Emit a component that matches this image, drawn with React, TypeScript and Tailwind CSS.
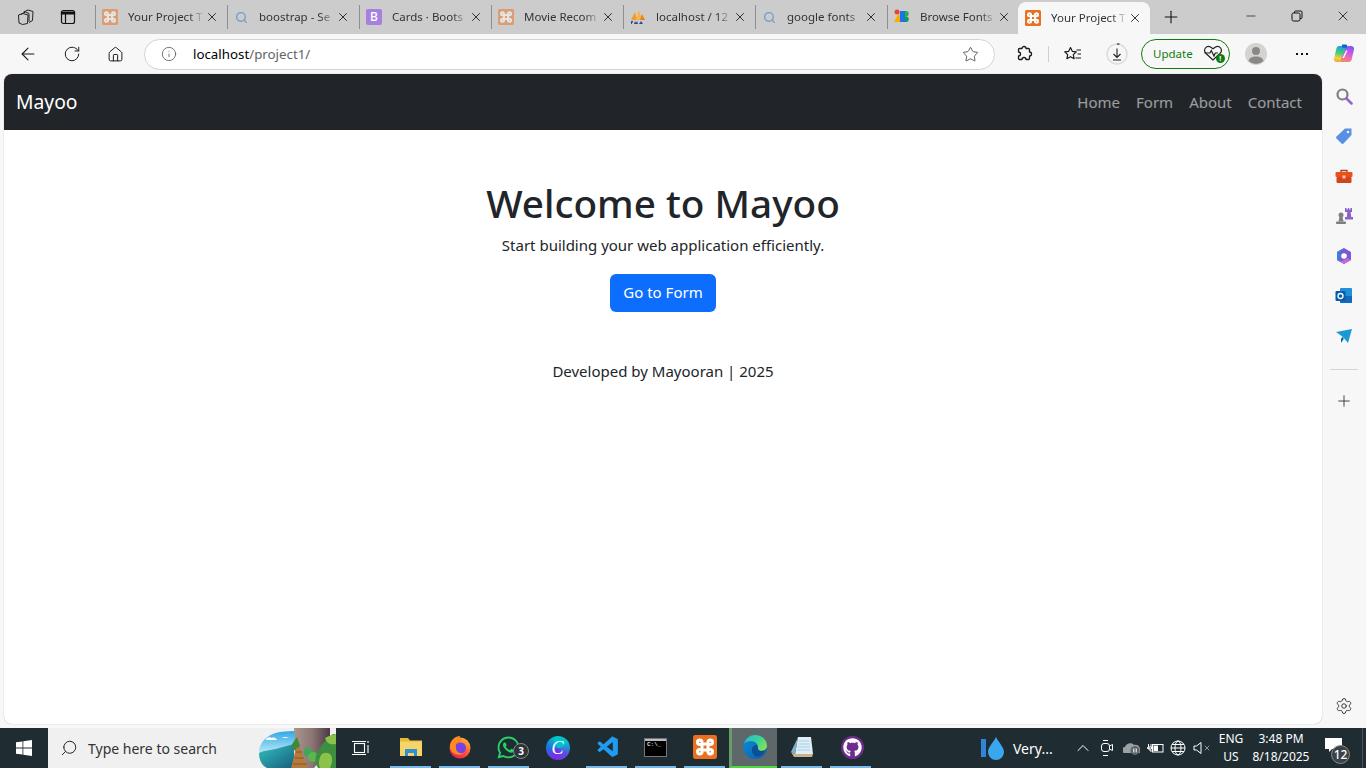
import { ArrowLeft, ChevronUp, Home, Info, Minus, Plus, RotateCw, Search, Settings, Star, X } from "lucide-react";
import { FaGithub, FaWhatsapp } from "react-icons/fa";
import { VscVscode } from "react-icons/vsc";

const Xampp = ({ faded = false, size = 16 }: { faded?: boolean; size?: number }) => (
  <svg width={size} height={size} viewBox="0 0 16 16" className={faded ? "shrink-0 opacity-50" : "shrink-0"}>
    <rect width="16" height="16" rx="1.500" fill="#e8701f" />
    <path
      d="M6 6V4.800a1.500 1.500 0 1 0-1.500 1.500H6zM10 6V4.800a1.500 1.500 0 1 1 1.500 1.500H10zM6 10v1.200a1.500 1.500 0 1 1-1.500-1.500H6zM10 10v1.200a1.500 1.500 0 1 0 1.500-1.500H10zM6 6h4v4H6z"
      fill="none"
      stroke="#fff"
      strokeWidth="2"
      strokeLinejoin="round"
    />
  </svg>
);

const SearchFav = () => <Search size={13} strokeWidth={2.500} className="mx-[1px] shrink-0 text-[#6f9fcb]" />;

const BootstrapFav = () => (
  <div className="flex h-4 w-4 shrink-0 items-center justify-center rounded-[2px] bg-[#a77fe0] text-[12px] font-medium leading-none text-white">
    B
  </div>
);

const PmaFav = () => (
  <svg width="16" height="16" viewBox="0 0 16 16" className="shrink-0">
    <path d="M1 11 5 3l2 8z" fill="#f29a2e" />
    <path d="M6 11 9 1l3 10z" fill="#f7b24a" />
    <path d="M10 11 12 5l3 6z" fill="#e8821e" />
    <path d="M1 15V12h2v1.500H2V15zM4 15l1-3 1 2 1-2 1 3zM9 15l2-3 2 3z" fill="#2d4a8c" />
  </svg>
);

const FontsFav = () => (
  <svg width="16" height="16" viewBox="0 0 16 16" className="shrink-0">
    <path d="M0 13 5 4l2 9z" fill="#f9ab00" />
    <circle cx="3" cy="3" r="2.500" fill="#ea4335" />
    <rect x="6" y="2" width="5" height="11" fill="#1a73e8" />
    <path d="M11 2h2a3 3 0 0 1 0 5.500h-2z" fill="#34a853" />
    <path d="M11 7.500h2a3 3 0 0 1 0 5.500h-2z" fill="#0f9d58" />
  </svg>
);

const tabs = [
  { id: 1, icon: <Xampp faded />, title: "Your Project T" },
  { id: 2, icon: <SearchFav />, title: "boostrap - Se" },
  { id: 3, icon: <BootstrapFav />, title: "Cards · Boots" },
  { id: 4, icon: <Xampp faded />, title: "Movie Recom" },
  { id: 5, icon: <PmaFav />, title: "localhost / 12" },
  { id: 6, icon: <SearchFav />, title: "google fonts" },
  { id: 7, icon: <FontsFav />, title: "Browse Fonts" },
];

function Tab({ icon, title, active }: { icon: React.ReactNode; title: string; active?: boolean }) {
  return (
    <div
      className={
        active
          ? "-ml-px flex h-[32px] w-[132px] shrink-0 items-center rounded-t-lg bg-[#f7f7f7] pl-[7px]"
          : "flex h-[24px] w-[132px] shrink-0 items-center self-center border-l border-[#8f8f8f] pl-[6px]"
      }
    >
      {icon}
      <span className="ml-[10px] w-[76px] whitespace-nowrap text-[11.500px] text-[#333] [mask-image:linear-gradient(to_right,black_80%,transparent)]">
        {title}
      </span>
      <X size={14} strokeWidth={1.500} className="ml-[1px] shrink-0 text-[#1a1a1a]" />
    </div>
  );
}

function Workspaces() {
  return (
    <svg width="18" height="18" viewBox="0 0 18 18" fill="none" stroke="#222" strokeWidth="1">
      <path d="M6.500 4 11 2l5 1.500-.5 9-3.500 2" />
      <path d="M4 6.300 8.500 4l3.500 1.500v8" />
      <path d="M1.500 7 6 5.500 11 7l-.5 8.500-5 1-3.500-1.500z" />
    </svg>
  );
}

function Extensions() {
  return (
    <svg width="18" height="18" viewBox="0 0 18 18" fill="none" stroke="#1a1a1a" strokeWidth="1.300" strokeLinejoin="round">
      <path d="M7 3.500a2 2 0 0 1 4 0h2.500a1 1 0 0 1 1 1V7a2 2 0 0 1 0 4v2.500a1 1 0 0 1-1 1H11a2 2 0 0 0-4 0H4.500a1 1 0 0 1-1-1V11a2 2 0 0 0 0-4V4.500a1 1 0 0 1 1-1z" />
    </svg>
  );
}

function Favorites() {
  return (
    <svg width="20" height="18" viewBox="0 0 20 18" fill="none" stroke="#1a1a1a" strokeWidth="1.200" strokeLinejoin="round">
      <path d="m7.500 2.500 1.800 3.800 4 .5-3 2.800.8 4.100-3.600-2-3.600 2 .8-4.100-3-2.800 4-.5z" />
      <path d="M13.500 5H18M14.500 9H18M12.500 13H18" />
    </svg>
  );
}

function DownloadRing() {
  return (
    <svg width="22" height="22" viewBox="0 0 22 22" fill="none">
      <circle cx="11" cy="11" r="10" stroke="#dcdcdc" strokeWidth="1.500" />
      <path d="M11 1a10 10 0 0 1 2.500.3" stroke="#555" strokeWidth="1.500" />
      <path d="M11 5.500v9M7.500 11l3.500 3.500 3.500-3.500M7 17h8" stroke="#222" strokeWidth="1.100" />
    </svg>
  );
}

function HeartPulse() {
  return (
    <div className="relative h-[18px] w-[22px]">
      <svg width="20" height="16" viewBox="0 0 20 16" fill="none" stroke="#222" strokeWidth="1.200">
        <path d="M10 15 3 8.500C-.5 5 3.500-.5 7.500 2L10 3.800 12.500 2c4-2.500 8 3 4.500 6.500z" />
        <path d="M1.500 8H7l1.300-2.500L11 11l1.300-3H15" />
      </svg>
      <div className="absolute right-0 bottom-0 flex h-[9px] w-[9px] items-center justify-center rounded-full bg-[#107c10] text-[7px] font-bold leading-none text-white">
        !
      </div>
    </div>
  );
}

function Avatar() {
  return (
    <svg width="22" height="22" viewBox="0 0 22 22">
      <circle cx="11" cy="11" r="11" fill="#d5d3d0" />
      <circle cx="11" cy="8" r="4" fill="#8a8886" />
      <path d="M3.500 18c1-3.500 4-4.500 7.500-4.500s6.500 1 7.500 4.500a11 11 0 0 1-15 0z" fill="#8a8886" />
    </svg>
  );
}

function Copilot() {
  return (
    <svg width="22" height="22" viewBox="0 0 22 22">
      <defs>
        <linearGradient id="cp1" x1="0.600" y1="0" x2="0.400" y2="1">
          <stop offset="0" stopColor="#1e9be8" />
          <stop offset="0.450" stopColor="#3fd07a" />
          <stop offset="0.800" stopColor="#f5d33c" />
          <stop offset="1" stopColor="#f5a33c" />
        </linearGradient>
        <linearGradient id="cp2" x1="0.600" y1="0" x2="0.400" y2="1">
          <stop offset="0" stopColor="#7a5cf0" />
          <stop offset="0.500" stopColor="#d85ae0" />
          <stop offset="1" stopColor="#f58a6a" />
        </linearGradient>
      </defs>
      <path d="M6 3h7c1 0 2 .8 1.500 2L9.500 17C9 18.500 8 19 6.500 19H4c-2 0-3.500-1.500-3-3.500L3.500 5C4 3.800 5 3 6 3z" fill="url(#cp1)" />
      <path d="M13 5c.5-1.500 1.500-2 3-2h2c2 0 3.500 1.500 3 3.500L18.500 17c-.5 1.200-1.500 2-2.500 2H9c-1 0-2-.8-1.500-2z" fill="url(#cp2)" />
      <path d="M13 7.500h1.500L11 15H9.500z" fill="#fff" />
      <path d="M9 1.500h4c1 0 1.500 1 1 2l-1 2c-1-1-3-1-4-1z" fill="#1463c8" />
    </svg>
  );
}

const sideIcons = [
  <svg key="search" width="18" height="18" viewBox="0 0 18 18" fill="none">
    <circle cx="7.500" cy="7.500" r="5" stroke="#7d7d7d" strokeWidth="2.200" />
    <path d="m11.500 11.500 5 5" stroke="#9a5fd0" strokeWidth="2.500" strokeLinecap="round" />
  </svg>,
  <svg key="tag" width="18" height="18" viewBox="0 0 18 18">
    <path d="M10 1.500h6.500V8l-8 8.500a1.500 1.500 0 0 1-2 0l-5-5a1.500 1.500 0 0 1 0-2z" fill="#5a8fe6" />
    <circle cx="13" cy="5" r="1.300" fill="#e8eefb" />
  </svg>,
  <svg key="tools" width="18" height="18" viewBox="0 0 18 18" className="translate-y-[1px]">
    <path d="M6 4V2.500h6V4" fill="none" stroke="#a8431c" strokeWidth="1.300" />
    <rect x="0.500" y="4" width="17" height="5" rx="1" fill="#e8501f" />
    <rect x="1.500" y="9" width="15" height="6" rx="1" fill="#d2451a" />
    <rect x="7.500" y="7.500" width="3" height="3" fill="#f3c9b5" />
  </svg>,
  <svg key="chess" width="18" height="18" viewBox="0 0 18 18">
    <circle cx="6" cy="8" r="2.500" fill="#7f7f7f" />
    <path d="M4.500 10h3l1 4.500h-5z" fill="#7f7f7f" />
    <rect x="1" y="14.500" width="10" height="2.500" rx=".8" fill="#7f7f7f" />
    <path d="M10 1h1.500v1.500h1.300V1h1.400v1.500h1.300V1H17v4h-1.300l.5 5H18v2.500h-8V10h1.800l.5-5H10z" fill="#8a63c9" />
  </svg>,
  <svg key="m365" width="18" height="18" viewBox="0 0 18 18">
    <path d="M9 1 16 5v8l-7 4-7-4V5z" fill="#7a5ad0" />
    <path d="M9 1 2 5v8l3 1.700V7z" fill="#3f7fd8" />
    <path d="m5 14.700 4 2.300 7-4-3-1.800z" fill="#c56ad8" />
    <circle cx="9" cy="9" r="2.800" fill="#fff" />
  </svg>,
  <svg key="outlook" width="18" height="18" viewBox="0 0 18 18">
    <rect x="5" y="1" width="12" height="15" rx="1" fill="#1f8fd8" />
    <path d="M5 9h12v6a1 1 0 0 1-1 1H6a1 1 0 0 1-1-1z" fill="#0f6cbd" />
    <rect x="0.500" y="4" width="10" height="10" rx="1.200" fill="#0a5aa8" />
    <circle cx="5.500" cy="9" r="2.500" fill="none" stroke="#fff" strokeWidth="1.300" />
  </svg>,
  <svg key="send" width="18" height="18" viewBox="0 0 18 18">
    <path d="M1 5 17 2 13 16 8 10z" fill="#1c9ad6" />
    <path d="M8 10 17 2l-11 9.500L6 16l2.800-4z" fill="#0d6ba8" />
  </svg>,
];

function Windows() {
  return (
    <svg width="16" height="16" viewBox="0 0 16 16" fill="#fff">
      <path d="M0 2.300 6.500 1.400v6.200H0zM7.300 1.300 16 0v7.600H7.300zM0 8.400h6.500v6.200L0 13.700zM7.300 8.400H16V16l-8.700-1.300z" />
    </svg>
  );
}

function SearchArt() {
  return (
    <svg width="78" height="40" viewBox="0 0 78 40" className="shrink-0">
      <defs>
        <linearGradient id="sky" x1="0" y1="0" x2="0" y2="1">
          <stop offset="0" stopColor="#2fa8ea" />
          <stop offset="1" stopColor="#c8eef8" />
        </linearGradient>
        <linearGradient id="lake" x1="0" y1="0" x2="1" y2="1">
          <stop offset="0" stopColor="#35c0c0" />
          <stop offset="1" stopColor="#17607e" />
        </linearGradient>
        <linearGradient id="cliff" x1="0" y1="0" x2="1" y2="0">
          <stop offset="0" stopColor="#a9968c" />
          <stop offset="0.500" stopColor="#8c7674" />
          <stop offset="1" stopColor="#4a3a44" />
        </linearGradient>
      </defs>
      <path d="M1 24C1 14 10 6 22 4c6-1 12-1 16-1v20L20 26C12 28 4 27 1 24z" fill="url(#sky)" />
      <path d="M8 11c2-2 4-2 6-1 2-1 4 0 5 2H8zM24 10c2-1.500 4-1.500 7 0z" fill="#fff" />
      <path d="M1 25c5-3 14-3 20-5l15-4v24H9C3 37 1 31 1 25z" fill="url(#lake)" />
      <path d="M36 0h36v22L56 40H42L37 20z" fill="url(#cliff)" />
      <path d="M33 20c1-5 4-8 6-11l3 9-4 5z" fill="#3d8a3a" />
      <path d="M33 40c2-6 3-13 5-20h4l8 20z" fill="#b57a3e" />
      <path d="M38 24h6M37 30h9M35 36h14" stroke="#8a5527" strokeWidth="1" />
      <circle cx="50" cy="24" r="4.500" fill="#3fa65a" />
      <circle cx="55" cy="29" r="5" fill="#58b84e" />
      <path d="M60 40c-4-6-3-14 2-20 3-5 7-10 13-14h3v34z" fill="#3e8e3f" />
      <path d="M67 10c3-2 7-3 11-4v10c-5 1-9 0-11-6zM63 27c3-3 7-3 10 0 2 4 1 9-1 13H62c-2-4-1-9 1-13z" fill="#8cc24a" />
    </svg>
  );
}

function Explorer() {
  return (
    <svg width="22" height="20" viewBox="0 0 22 20">
      <path d="M0 1h8l2 2.500h12V19H0z" fill="#e8b93c" />
      <rect y="4.500" width="22" height="14.500" fill="#f6d568" />
      <path d="M5 12h12v7h-3v-3H8v3H5z" fill="#2f8fd8" />
    </svg>
  );
}

function Firefox() {
  return (
    <svg width="24" height="24" viewBox="0 0 24 24">
      <defs>
        <linearGradient id="ff" x1="0.800" y1="0" x2="0.200" y2="1">
          <stop offset="0" stopColor="#ffbd2e" />
          <stop offset="0.500" stopColor="#ff5a36" />
          <stop offset="1" stopColor="#e6175c" />
        </linearGradient>
      </defs>
      <circle cx="12" cy="13" r="10.500" fill="url(#ff)" />
      <circle cx="12.500" cy="13" r="5.500" fill="#7542e5" />
      <path d="M3 7c2-4 6-6 9-6-1 2 0 3 2 4-4 0-7 3-6 8 0 4 4 6 8 5-5 4-14 1-14-7 0-2 .5-3 1-4z" fill="#ff8a1f" />
    </svg>
  );
}

function Canva() {
  return (
    <div className="flex h-6 w-6 items-center justify-center rounded-full bg-[conic-gradient(from_200deg,#7d2ae8,#1f6fe0,#00c4cc,#00c4cc,#5a4be0,#7d2ae8)] font-['Liberation_Serif',serif] text-[18px] italic leading-none text-white">
      C
    </div>
  );
}

function Terminal() {
  return (
    <div className="h-[19px] w-[23px] border border-[#777] bg-black">
      <div className="h-[2px] bg-[#bdbdbd]" />
      <div className="px-[2px] font-['Liberation_Mono',monospace] text-[6px] font-bold leading-[8px] text-[#ddd]">C:\_</div>
    </div>
  );
}

function Edge() {
  return (
    <svg width="24" height="24" viewBox="0 0 24 24">
      <defs>
        <linearGradient id="eg" x1="0" y1="0" x2="1" y2="0.600">
          <stop offset="0" stopColor="#2bb4d8" />
          <stop offset="0.600" stopColor="#3ad49a" />
          <stop offset="1" stopColor="#7fe05a" />
        </linearGradient>
        <linearGradient id="eb" x1="0" y1="0" x2="1" y2="1">
          <stop offset="0" stopColor="#0f8fd8" />
          <stop offset="1" stopColor="#0b5aa8" />
        </linearGradient>
      </defs>
      <circle cx="12" cy="12" r="12" fill="url(#eb)" />
      <path d="M1 9C3 3 7 0 12 0c7 0 12 5 12 11 0 3-3 5-6 5-4 0-3-3-3-4 0-3-3-6-7-6-3 0-6 1-7 3z" fill="url(#eg)" />
      <path d="M9 15c0-3 2-5 5-5 1 2 0 5 4 6 1 0 3 0 4-1-1 3-3 5-5 6-5 2-8-2-8-6z" fill="#0c4f96" />
    </svg>
  );
}

function Notepad() {
  return (
    <svg width="24" height="24" viewBox="0 0 24 24">
      <path d="M8 2h13l2 17H5z" fill="#dfeef7" />
      <path d="M8 2 1 17l4 2z" fill="#7fb0cc" />
      <path d="M9 6h10M8.500 9h11M7.500 12h12.500M7 15h13" stroke="#a6d0e6" strokeWidth="1" />
      <path d="M1 17l4 2h18l-1 3H4z" fill="#c9b48a" />
    </svg>
  );
}

function TaskItem({ running, active, children }: { running?: boolean; active?: boolean; children: React.ReactNode }) {
  return (
    <div className={active ? "flex h-10 w-[48px] shrink-0 items-center justify-center border-b-2 border-l-[3px] border-b-[#4ddb3c] border-l-[#6b9a6b] bg-[#5e686b]" : "flex h-10 w-[49px] shrink-0 items-center justify-center px-[4px]"}>
      <div className={running ? "relative flex h-10 w-full items-center justify-center border-b-2 border-[#76b9ed]" : "relative flex h-10 w-full items-center justify-center"}>
        {children}
      </div>
    </div>
  );
}

function Tray() {
  return (
    <div className="flex h-10 flex-1 items-center text-white">
      <div className="ml-[106px] flex w-[26px] items-center">
        <div className="h-[18px] w-[5px] bg-[#2f86d8]" />
        <svg width="18" height="24" viewBox="0 0 18 24" className="ml-[1px]">
          <path d="M9 1c3 6 8 10 8 15a8 8 0 0 1-16 0C1 11 6 7 9 1z" fill="#3aa6ee" />
        </svg>
      </div>
      <span className="ml-[6px] w-[40px] text-[14px]">Very...</span>
      <ChevronUp size={20} strokeWidth={1.200} className="ml-[20px]" />
      <svg width="14" height="18" viewBox="0 0 14 18" fill="none" stroke="#fff" strokeWidth="1" className="ml-[7px]">
        <rect x="1.500" y="4.500" width="8" height="8" rx="2.500" />
        <path d="m9.500 7 3-1.500v6L9.500 10M3 1.500h5M3 16.500h5" />
      </svg>
      <svg width="18" height="14" viewBox="0 0 18 14" className="ml-[9px]">
        <path d="M2 12a3 3 0 0 1 0-6c1-4 7-5 9-2 3-1 6 1 6 4v4z" fill="#9aa1a5" />
        <circle cx="12" cy="9.500" r="4.500" fill="#5f6669" />
        <path d="M10.800 7.500v4M13.200 7.500v4" stroke="#fff" strokeWidth="1" />
      </svg>
      <svg width="17" height="14" viewBox="0 0 17 14" fill="none" stroke="#fff" strokeWidth="1" className="ml-[6px]">
        <rect x="5.500" y="3.500" width="10.500" height="7.500" />
        <rect x="7" y="5" width="3.500" height="4.500" fill="#fff" />
        <path d="M0 7h3M1.500 3v3M4 3v3M1 6h3.500v2H1zM3 8v2h2.500" />
      </svg>
      <svg width="16" height="16" viewBox="0 0 16 16" fill="none" stroke="#fff" strokeWidth="1" className="ml-[6px]">
        <circle cx="8" cy="8" r="7" />
        <ellipse cx="8" cy="8" rx="3" ry="7" />
        <path d="M1 8h14M2 4.500h12M2 11.500h12" />
      </svg>
      <div className="ml-[7px] flex items-center">
        <svg width="9" height="14" viewBox="0 0 9 14" fill="none" stroke="#fff" strokeWidth="1">
          <path d="M1 5h2.500L8 1.500v11L3.500 9H1z" />
        </svg>
        <X size={8} strokeWidth={1.500} className="ml-[1px]" />
      </div>
      <div className="ml-[2px] flex w-[36px] flex-col items-center text-[12px] leading-[18px]">
        <span>ENG</span>
        <span>US</span>
      </div>
      <div className="flex w-[64px] flex-col items-center text-[12px] leading-[18px]">
        <span>3:48 PM</span>
        <span>8/18/2025</span>
      </div>
      <div className="relative ml-[12px] h-10 w-[30px]">
        <svg width="17" height="15" viewBox="0 0 17 15" className="absolute top-[10px] left-0" fill="#fff">
          <path d="M0 0h17v11H7l-3 3v-3H0z" />
        </svg>
        <div className="absolute top-[17px] left-[6px] flex h-[19px] w-[19px] items-center justify-center rounded-full border border-[#888] bg-[#3b4347] text-[12px] font-medium leading-none">
          12
        </div>
      </div>
      <div className="ml-auto h-10 w-[4px] border-l border-[#4a5559]" />
    </div>
  );
}

export default function App() {
  return (
    <div className="flex h-[768px] w-[1366px] flex-col overflow-hidden bg-[#f7f7f7] font-['Noto_Sans',sans-serif] text-[#212529]">
      {/* tab strip */}
      <div className="flex h-[34px] shrink-0 items-end bg-[#cccccc]">
        <div className="flex h-[32px] w-[95px] shrink-0 items-center pb-[2px] pl-[17px]">
          <Workspaces />
          <svg width="16" height="16" viewBox="0 0 16 16" fill="none" stroke="#111" strokeWidth="1.200" className="ml-[25px]">
            <rect x="1.500" y="1.500" width="13" height="13" rx="2" />
            <path d="M1.500 3h13v2h-13zM5.500 5v9" fill="#111" />
          </svg>
        </div>
        {tabs.map((t) => (
          <Tab key={t.id} icon={t.icon} title={t.title} />
        ))}
        <Tab active icon={<Xampp />} title="Your Project T" />
        <Plus size={20} strokeWidth={1.300} className="mb-[7px] ml-[11px] shrink-0 text-[#111]" />
        <div className="mb-[10px] ml-auto flex w-[138px] items-center text-[#111]">
          <Minus size={14} strokeWidth={1.200} className="ml-[16px]" />
          <svg width="12" height="12" viewBox="0 0 12 12" fill="none" stroke="#111" strokeWidth="1" className="ml-[33px]">
            <rect x="1" y="3" width="8" height="8" rx="1.500" />
            <path d="M3.500 3V2a1 1 0 0 1 1-1H10a1 1 0 0 1 1 1v5.500a1 1 0 0 1-1 1H9" />
          </svg>
          <X size={16} strokeWidth={1.200} className="ml-[32px]" />
        </div>
      </div>

      {/* toolbar */}
      <div className="flex h-[40px] shrink-0 items-center bg-[#f7f7f7] text-[#1a1a1a]">
        <ArrowLeft size={20} strokeWidth={1.300} className="ml-[18px]" />
        <RotateCw size={18} strokeWidth={1.300} className="ml-[25px]" />
        <Home size={17} strokeWidth={1.400} className="ml-[26px]" />
        <div className="ml-[20px] flex h-[31px] w-[851px] items-center rounded-full border border-[#d3d3d3] bg-white pr-[15px] pl-[16px]">
          <Info size={16} strokeWidth={1.200} className="text-[#555]" />
          <span className="ml-[16px] pt-[1px] text-[13.300px] leading-none text-black">
            localhost<span className="text-[#5f6368]">/project1/</span>
          </span>
          <Star size={17} strokeWidth={1.100} className="ml-auto text-[#333]" />
        </div>
        <div className="ml-[20px]">
          <Extensions />
        </div>
        <div className="ml-[15px] h-[16px] w-px bg-[#cfcfcf]" />
        <div className="ml-[14px]">
          <Favorites />
        </div>
        <div className="ml-[23px]">
          <DownloadRing />
        </div>
        <div className="ml-[13px] flex h-[30px] w-[89px] items-center rounded-full border border-[#107c10] pl-[11px] text-[#107c10]">
          <span className="text-[11.500px] leading-none">Update</span>
          <div className="ml-[10px]">
            <HeartPulse />
          </div>
        </div>
        <div className="ml-[15px]">
          <Avatar />
        </div>
        <div className="ml-[29px] flex gap-[3px]">
          <div className="h-[2px] w-[2px] bg-[#111]" />
          <div className="h-[2px] w-[2px] bg-[#111]" />
          <div className="h-[2px] w-[2px] bg-[#111]" />
        </div>
        <div className="ml-[25px]">
          <Copilot />
        </div>
      </div>

      {/* page + sidebar */}
      <div className="flex min-h-0 flex-1">
        <div className="mb-[4px] ml-[4px] w-[1318px] overflow-hidden rounded-lg bg-white shadow-[0_0_1px_#9a9a9a]">
          <nav className="flex h-[56px] items-center bg-[#212529] pr-[20px] pl-[12px]">
            <span className="pt-[1px] text-[19.300px] text-white">Mayoo</span>
            <div className="ml-auto flex gap-[16px] text-[15px] text-white/55">
              <span>Home</span>
              <span>Form</span>
              <span>About</span>
              <span>Contact</span>
            </div>
          </nav>
          <main className="flex flex-col items-center pt-[49px]">
            <h1 className="text-[38.700px] leading-[48px] font-medium">Welcome to Mayoo</h1>
            <p className="mt-[6px] text-[15px] leading-[24px]">Start building your web application efficiently.</p>
            <button className="mt-[17px] h-[38px] w-[106px] rounded-md bg-[#0d6efd] pb-[1px] text-[15px] text-white">Go to Form</button>
            <footer className="mt-[47px] text-[15px] leading-[24px]">Developed by Mayooran | 2025</footer>
          </main>
        </div>
        <aside className="flex w-[44px] flex-col items-center pt-[2px]">
          {sideIcons.map((icon) => (
            <div key={icon.key} className="flex h-[40px] w-full shrink-0 items-center justify-center">
              {icon}
            </div>
          ))}
          <div className="mt-[13px] h-px w-[28px] bg-[#d5d5d5]" />
          <Plus size={18} strokeWidth={1.100} className="mt-[22px] text-[#222]" />
          <Settings size={18} strokeWidth={1.300} className="mt-auto mb-[13px] text-[#333]" />
        </aside>
      </div>

      {/* windows taskbar */}
      <div className="flex h-[40px] shrink-0 items-center bg-[#1f2d33]">
        <div className="flex h-10 w-[48px] shrink-0 items-center justify-center">
          <Windows />
        </div>
        <div className="flex h-10 w-[288px] shrink-0 items-center overflow-hidden bg-[#f0f0f0] pl-[12px]">
          <Search size={18} strokeWidth={1.300} className="-scale-x-100 text-[#222]" />
          <span className="ml-[10px] text-[14px] text-[#333]">Type here to search</span>
          <div className="ml-auto">
            <SearchArt />
          </div>
        </div>
        <div className="flex h-10 w-[50px] shrink-0 items-center justify-center">
          <svg width="18" height="16" viewBox="0 0 18 16" fill="none" stroke="#fff" strokeWidth="1.100">
            <rect x="2.500" y="3.500" width="10" height="9" />
            <path d="M0 1.500h14M0 14.500h14M16 1v2M16 5v8" />
          </svg>
        </div>
        <TaskItem running>
          <Explorer />
        </TaskItem>
        <TaskItem running>
          <Firefox />
        </TaskItem>
        <TaskItem running>
          <FaWhatsapp size={25} className="text-[#25d366]" />
          <div className="absolute top-[15px] left-[25px] flex h-[16px] w-[16px] items-center justify-center rounded-full border border-[#888] bg-[#2d3438] text-[10px] font-bold leading-none text-white">
            3
          </div>
        </TaskItem>
        <TaskItem>
          <Canva />
        </TaskItem>
        <TaskItem running>
          <VscVscode size={25} className="ml-[3px] text-[#1f9cf0]" />
        </TaskItem>
        <TaskItem running>
          <Terminal />
        </TaskItem>
        <TaskItem running>
          <Xampp size={24} />
        </TaskItem>
        <TaskItem active>
          <Edge />
        </TaskItem>
        <TaskItem running>
          <Notepad />
        </TaskItem>
        <TaskItem running>
          <div className="ml-[3px] flex h-[23px] w-[23px] items-center justify-center rounded-full bg-[#6e2c91]">
            <FaGithub size={19} className="text-white" />
          </div>
        </TaskItem>
        <Tray />
      </div>
    </div>
  );
}
